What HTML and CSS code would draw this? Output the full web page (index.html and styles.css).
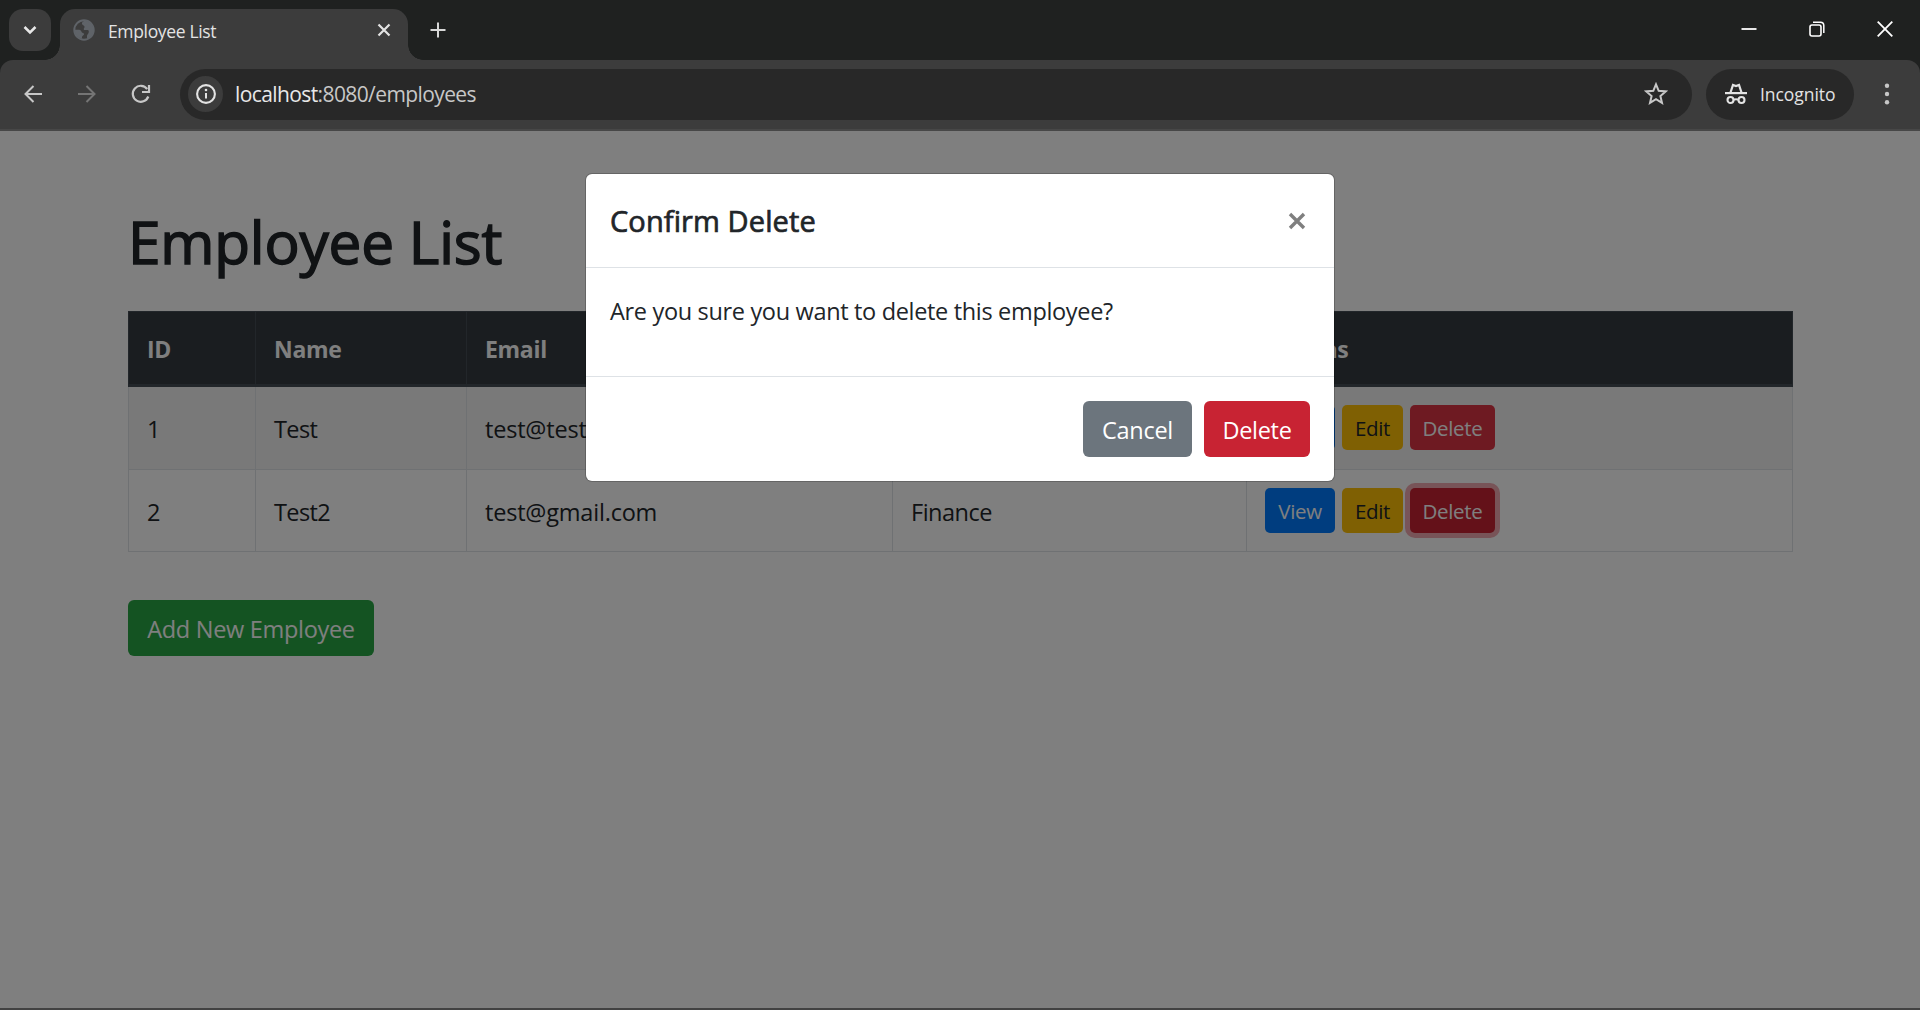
FILE: index.html
```html
<!DOCTYPE html>
<html lang="en">
<head>
<meta charset="utf-8">
<title>Employee List</title>
<link rel="stylesheet" href="styles.css">
</head>
<body>
<div class="window">
  <header class="tabstrip">
    <div class="tab-search"><svg width="42" height="42" viewBox="0 0 42 42"><path d="M15.500 18l5.500 5.500 5.500-5.500" fill="none" stroke="#e8e8e8" stroke-width="2.5"/></svg></div>
    <div class="tab">
      <svg class="globe" width="22" height="22" viewBox="0 0 22 22"><circle cx="11" cy="11" r="9.700" fill="none" stroke="#5f6368" stroke-width="2"/><path d="M12 1.500c-2 1-3.500 2-3 3.500.5 1.200 2 1 2.500 2.500.4 1.500-1.500 2-.5 3.500h3.500c1.500 0 1.500 1.500 1 3-.4 1.200-1.500 1.500-1.500 3v3c3.500-1 6.500-4 6.500-9 0-5-4-8.500-8.500-9.500zM1.700 10.500c2 1 3.300-.5 5.300.5s1 2.500 3 3c1.500.4 1.500 1.500 0 2.500-1.500.8-.5 2-1.500 3.500C4.500 18.500 1.500 15 1.700 10.500z" fill="#5f6368"/></svg>
      <span class="tab-title">Employee List</span>
      <svg class="tab-close" width="14" height="14" viewBox="0 0 14 14"><path d="M1.5 1.500l11 11M12.500 1.500l-11 11" stroke="#e3e3e3" stroke-width="2.200"/></svg>
    </div>
    <svg class="new-tab" width="16" height="16" viewBox="0 0 16 16"><path d="M8 .5v15M.5 8h15" stroke="#d8d8d8" stroke-width="2"/></svg>
    <div class="window-controls">
      <svg width="16" height="16" viewBox="0 0 16 16"><path d="M.5 8h15" stroke="#fff" stroke-width="1.800"/></svg>
      <svg width="16" height="16" viewBox="0 0 16 16"><rect x="1" y="4" width="11" height="11" rx="2" fill="none" stroke="#fff" stroke-width="1.600"/><path d="M4 1.200h7.500q3.300 0 3.300 3.300V12" fill="none" stroke="#fff" stroke-width="1.500"/></svg>
      <svg width="16" height="16" viewBox="0 0 16 16"><path d="M.7.7l14.600 14.600M15.300.7L.7 15.300" stroke="#fff" stroke-width="1.800"/></svg>
    </div>
  </header>
  <nav class="toolbar">
    <svg class="nav-icon" width="18" height="18" viewBox="0 0 18 18"><path d="M18 9H1.500M9.500 1L1.500 9l8 8" fill="none" stroke="#c7c7c7" stroke-width="2"/></svg>
    <svg class="nav-icon" width="18" height="18" viewBox="0 0 18 18"><path d="M0 9h16.500M8.500 1l8 8-8 8" fill="none" stroke="#757575" stroke-width="2"/></svg>
    <svg class="nav-icon reload" width="20" height="20" viewBox="0 0 20 20"><path d="M17.300 12.500A8 8 0 1 1 16.200 5" fill="none" stroke="#c7c7c7" stroke-width="2.200"/><path d="M18 1v7h-7" fill="none" stroke="#c7c7c7" stroke-width="2.200"/></svg>
    <div class="address">
      <div class="site-info"><svg width="20" height="20" viewBox="0 0 20 20"><circle cx="10" cy="10" r="8.900" fill="none" stroke="#e3e3e3" stroke-width="2.100"/><path d="M10 9v5.500" stroke="#e3e3e3" stroke-width="2"/><circle cx="10" cy="6" r="1.300" fill="#e3e3e3"/></svg></div>
      <span class="url">localhost<span class="url-path">:8080/employees</span></span>
      <svg class="star" width="24" height="24" viewBox="0 0 24 24"><path d="M12 2.300l2.700 6.500 7 .6-5.300 4.600 1.600 6.900-6-3.700-6 3.700L7.600 14 2.300 9.400l7-.6z" fill="none" stroke="#c7c7c7" stroke-width="2"/></svg>
    </div>
    <div class="incognito">
      <svg width="22" height="22" viewBox="0 0 22 22"><path d="M0 9h22v2.200H0z" fill="#e3e3e3"/><path d="M5.500 9.500L8 2l3 1 3-1 2.500 7.500" fill="none" stroke="#e3e3e3" stroke-width="2.200"/><circle cx="5.500" cy="17" r="3" fill="none" stroke="#e3e3e3" stroke-width="2.100"/><circle cx="16.500" cy="17" r="3" fill="none" stroke="#e3e3e3" stroke-width="2.100"/><path d="M8.300 16.700q2.700-1 5.400 0" fill="none" stroke="#e3e3e3" stroke-width="2"/></svg>
      <span>Incognito</span>
    </div>
    <svg class="menu" width="6" height="22" viewBox="0 0 6 22"><g fill="#c7c7c7"><circle cx="3" cy="2.700" r="2.200"/><circle cx="3" cy="11" r="2.200"/><circle cx="3" cy="19.300" r="2.200"/></g></svg>
  </nav>
  <main class="page">
    <div class="container">
      <h1 class="title">Employee List</h1>
      <table class="table">
        <colgroup><col class="c-id"><col class="c-name"><col class="c-email"><col class="c-dept"><col class="c-actions"></colgroup>
        <thead><tr><th>ID</th><th>Name</th><th>Email</th><th>Department</th><th>Actions</th></tr></thead>
        <tbody>
          <tr class="striped"><td>1</td><td>Test</td><td>test@test</td><td></td><td><div class="actions"><a class="btn-sm view">View</a><a class="btn-sm edit">Edit</a><a class="btn-sm delete">Delete</a></div></td></tr>
          <tr><td>2</td><td>Test2</td><td>test@gmail.com</td><td>Finance</td><td><div class="actions"><a class="btn-sm view">View</a><a class="btn-sm edit">Edit</a><a class="btn-sm delete focused">Delete</a></div></td></tr>
        </tbody>
      </table>
      <a class="btn add">Add New Employee</a>
    </div>
    <div class="backdrop">
      <section class="modal">
        <div class="modal-header"><h5 class="modal-title">Confirm Delete</h5>
          <svg width="18" height="18" viewBox="0 0 18 18"><path d="M2 2l14 14M16 2L2 16" stroke="#7f7f7f" stroke-width="3.400"/></svg></div>
        <div class="modal-body">Are you sure you want to delete this employee?</div>
        <div class="modal-footer"><a class="btn cancel">Cancel</a><a class="btn confirm">Delete</a></div>
      </section>
    </div>
  </main>
</div>
</body>
</html>
```
FILE: styles.css
```css
* { box-sizing: border-box; }
body { margin: 0; background: #1f2120; font-family: "Segoe UI", "Open Sans", "Noto Sans", sans-serif; }
svg { display: block; flex: none; }
.window { display: flex; flex-direction: column; width: 1920px; height: 1010px; overflow: hidden; background: #424242; }

/* Tab strip */
.tabstrip { display: flex; align-items: flex-start; height: 73px; margin-bottom: -13px; padding: 9px 15px 0 9px; background: #1f2120; }
.tab-search { width: 42px; height: 42px; border-radius: 14px; background: #3c3c3c; }
.tab { position: relative; display: flex; align-items: center; width: 348px; height: 51px; margin-left: 9px; padding: 0 17px 9px 13px; border-radius: 15px 15px 0 0; background: #3c3c3c; }
.tab::before, .tab::after { content: ""; position: absolute; bottom: 0; width: 15px; height: 15px; }
.tab::before { left: -15px; background: radial-gradient(circle at 0 0, transparent 14.5px, #3c3c3c 15px); }
.tab::after { right: -15px; background: radial-gradient(circle at 100% 0, transparent 14.5px, #3c3c3c 15px); }
.tab-title { flex: 1; margin: 2px 0 0 13px; color: #e3e3e3; font-size: 17.5px; letter-spacing: -0.35px; }
.new-tab { margin: 13px 0 0 22px; }
.window-controls { display: flex; gap: 52px; margin: 12px 0 0 auto; padding-right: 12px; }

/* Toolbar */
.toolbar { position: relative; display: flex; align-items: center; height: 71px; padding: 0 30px 1px 24px; border-bottom: 2px solid #474747; border-radius: 13px 13px 0 0; background: #3c3c3c; }
.nav-icon { margin-right: 36px; }
.reload { margin: 0 29px 0 -1px; }
.address { display: flex; align-items: center; width: 1512px; height: 51px; margin-right: 14px; padding: 0 24px 0 8px; border-radius: 26px; background: #282828; }
.site-info { display: grid; place-items: center; width: 35px; height: 36px; border-radius: 50%; background: #3c3c3c; }
.url { flex: 1; margin-left: 12px; color: #e8e8e8; font-size: 21px; letter-spacing: -0.6px; }
.url-path { color: #c7c7c7; }
.incognito { display: flex; align-items: center; gap: 13px; width: 148px; height: 51px; padding-left: 19px; border-radius: 26px; background: #282828; color: #e3e3e3; font-size: 17.5px; letter-spacing: -0.05px; }
.menu { margin-left: auto; }

/* Page */
.page { position: relative; height: 877px; background: #fff; color: #212529; font-size: 23.5px; line-height: 36px; }
.container { width: 1665px; margin-left: 128px; padding-top: 72px; }
.title { height: 72px; margin: 0 0 36px; font-size: 58.5px; line-height: 76px; font-weight: 400; letter-spacing: -0.2px; -webkit-text-stroke: 1.5px currentColor; white-space: nowrap; }
.table { width: 1665px; table-layout: fixed; border-collapse: collapse; }
.c-id { width: 127px; }
.c-name { width: 211px; }
.c-email { width: 426px; }
.c-dept { width: 354px; }
.c-actions { width: 546px; }
.table th, .table td { padding: 2px 18px 0; border: 1px solid #dee2e6; text-align: left; white-space: nowrap; letter-spacing: -0.2px; }
.table th { height: 74px; background: #343a40; border-color: #454d55; border-bottom-width: 3px; color: #fff; font-weight: 700; font-size: 23px; letter-spacing: -0.3px; }
.table td { height: 82px; }
.table .striped td { height: 84px; }
.table td:nth-child(2) { letter-spacing: -0.6px; }
.table td:nth-child(4) { letter-spacing: -0.5px; }
.striped { background: #f2f2f2; }
.actions { display: flex; gap: 7px; align-items: center; margin-top: -2px; }
.striped .actions { margin-top: -3px; }
.btn-sm { display: flex; align-items: center; justify-content: center; height: 45px; border-radius: 5px; color: #fff; font-size: 20.5px; letter-spacing: -0.3px; padding-top: 1px; }
.view { width: 70px; background: #007bff; }
.edit { width: 61px; background: #ffc107; color: #212529; }
.delete { width: 85px; background: #dc3545; }
.focused { background: #c82333; box-shadow: 0 0 0 5px rgba(225, 83, 97, .5); }
.btn { display: flex; align-items: center; justify-content: center; height: 56px; border-radius: 6px; color: #fff; font-size: 23.5px; letter-spacing: -0.3px; padding-top: 2px; }
.add { width: 246px; margin-top: 48px; background: #28a745; }

/* Dialog */
.backdrop { position: absolute; inset: 0; display: flex; align-items: flex-start; justify-content: center; padding-top: 43px; background: rgba(0, 0, 0, .5); }
.modal { width: 748px; height: 307px; border-radius: 6px; background: #fff; box-shadow: 0 0 0 1px rgba(0, 0, 0, .2); }
.modal-header { display: flex; align-items: center; justify-content: space-between; height: 94px; padding: 0 28px 0 24px; border-bottom: 1px solid #dee2e6; }
.modal-title { margin: 1px 0 0; font-size: 29px; font-weight: 400; letter-spacing: 0.1px; -webkit-text-stroke: .7px currentColor; }
.modal-body { height: 108px; padding: 25px 24px; letter-spacing: -0.33px; white-space: nowrap; }
.modal-footer { display: flex; gap: 12px; justify-content: flex-end; padding: 24px; border-top: 1px solid #dee2e6; }
.cancel { width: 109px; background: #6c757d; }
.confirm { width: 106px; background: #c82333; }
```
